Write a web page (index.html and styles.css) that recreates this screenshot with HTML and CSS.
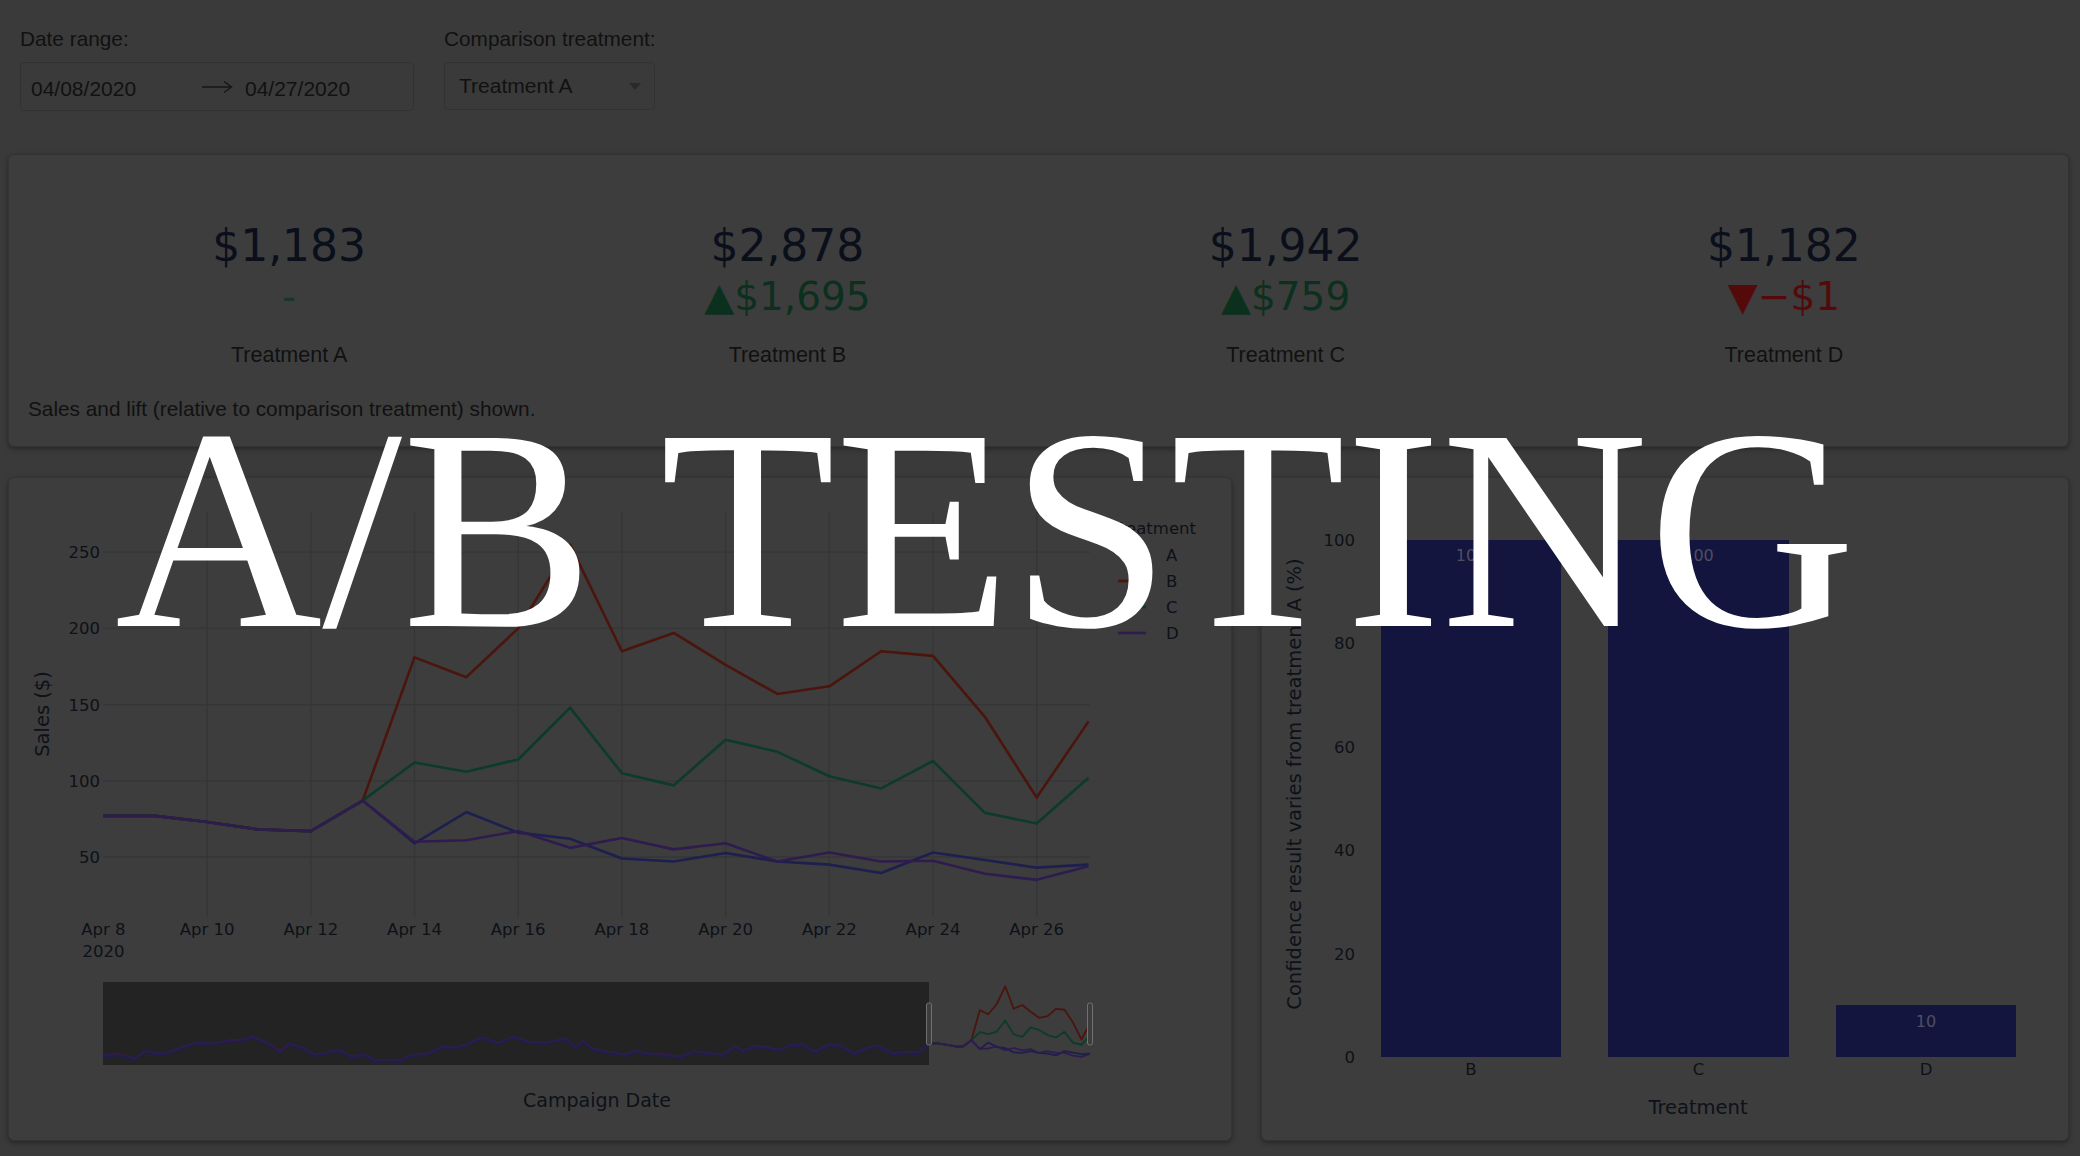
FILE: index.html
```html
<!DOCTYPE html>
<html lang="en">
<head>
<meta charset="utf-8">
<title>A/B Testing</title>
<link rel="stylesheet" href="styles.css">
</head>
<body>
<div class="page">
  <div class="controls">
    <div class="field">
      <label class="field-label">Date range:</label>
      <div class="date-box">
        <span class="date-start">04/08/2020</span>
        <svg class="date-arrow" width="31" height="14" viewBox="0 0 31 14"><path d="M0 7H29M22 1.5L29.5 7L22 12.5" fill="none" stroke="#161616" stroke-width="1.4"/></svg>
        <span class="date-end">04/27/2020</span>
      </div>
    </div>
    <div class="field">
      <label class="field-label">Comparison treatment:</label>
      <div class="select-box">
        <span>Treatment A</span>
        <span class="caret"></span>
      </div>
    </div>
  </div>

  <section class="card summary">
    <div class="indicators">
      <div class="indicator">
        <div class="ind-value">$1,183</div>
        <div class="ind-delta flat">-</div>
        <div class="ind-label">Treatment A</div>
      </div>
      <div class="indicator">
        <div class="ind-value">$2,878</div>
        <div class="ind-delta up">▲$1,695</div>
        <div class="ind-label">Treatment B</div>
      </div>
      <div class="indicator">
        <div class="ind-value">$1,942</div>
        <div class="ind-delta up">▲$759</div>
        <div class="ind-label">Treatment C</div>
      </div>
      <div class="indicator">
        <div class="ind-value">$1,182</div>
        <div class="ind-delta down">▼−$1</div>
        <div class="ind-label">Treatment D</div>
      </div>
    </div>
    <p class="note">Sales and lift (relative to comparison treatment) shown.</p>
  </section>

  <div class="charts">
    <section class="card chart-line">
      <svg class="chart-svg" width="1222" height="662" viewBox="9 478 1222 662">
        <g class="grid">
          <path d="M103 552.2H1090M103 628.4H1090M103 704.6H1090M103 780.8H1090M103 857H1090"/>
          <path d="M207.1 512V917M310.8 512V917M414.5 512V917M518.2 512V917M621.9 512V917M725.6 512V917M829.3 512V917M933 512V917M1036.7 512V917"/>
        </g>
        <g class="tick" text-anchor="end">
          <text x="100" y="558.2">250</text>
          <text x="100" y="634.4">200</text>
          <text x="100" y="710.6">150</text>
          <text x="100" y="786.8">100</text>
          <text x="100" y="863">50</text>
        </g>
        <g class="tick" text-anchor="middle">
          <text x="103.4" y="935">Apr 8</text>
          <text x="103.4" y="957">2020</text>
          <text x="207.1" y="935">Apr 10</text>
          <text x="310.8" y="935">Apr 12</text>
          <text x="414.5" y="935">Apr 14</text>
          <text x="518.2" y="935">Apr 16</text>
          <text x="621.9" y="935">Apr 18</text>
          <text x="725.6" y="935">Apr 20</text>
          <text x="829.3" y="935">Apr 22</text>
          <text x="933" y="935">Apr 24</text>
          <text x="1036.7" y="935">Apr 26</text>
        </g>
        <text class="axis-title" text-anchor="middle" transform="translate(49 714) rotate(-90)">Sales ($)</text>

        <g class="series" transform="translate(103.4 933.2) scale(51.85 -1.524)">
          <polyline class="s-a" vector-effect="non-scaling-stroke" points="0,77 1,77 2,73 3,68 4,67 5,87 6,59 7,79.5 8,66 9,62 10,49 11,47 12,52.6 13,47 14,45 15,39.5 16,53 17,48 18,43 19,45"/>
          <polyline class="s-b" vector-effect="non-scaling-stroke" points="0,77 1,77 2,73 3,68 4,67 5,87 6,181 7,168 8,200 9,255 10,185 11,197 12,176 13,157 14,162 15,185 16,182 17,142 18,89 19,139"/>
          <polyline class="s-c" vector-effect="non-scaling-stroke" points="0,77 1,77 2,73 3,68 4,67 5,87 6,112 7,106 8,114 9,148 10,105 11,97 12,127 13,119 14,103 15,95 16,113 17,79 18,72 19,102"/>
          <polyline class="s-d" vector-effect="non-scaling-stroke" points="0,77 1,77 2,73 3,68 4,67 5,87 6,60 7,61 8,67 9,56 10,62.5 11,55 12,59 13,47 14,53 15,47 16,47.5 17,39 18,35 19,44"/>
        </g>

        <g class="legend">
          <text class="tick" x="1112" y="534">Treatment</text>
          <path class="s-a" d="M1118 555H1146"/>
          <path class="s-b" d="M1118 581H1146"/>
          <path class="s-c" d="M1118 607H1146"/>
          <path class="s-d" d="M1118 633H1146"/>
          <text class="tick" x="1166" y="560.5">A</text>
          <text class="tick" x="1166" y="586.5">B</text>
          <text class="tick" x="1166" y="612.5">C</text>
          <text class="tick" x="1166" y="638.5">D</text>
        </g>

        <rect class="range-mask" x="103" y="982" width="826" height="83"/>
        <g class="mini" transform="translate(0 901.5) scale(0.7905 0.3333)">
          <polyline class="s-a" vector-effect="non-scaling-stroke" points="130,465 150,462 170,475 185,452 200,460 215,455 230,440 250,428 270,430 290,420 305,420 320,410 340,430 355,455 365,430 380,440 400,465 415,455 430,450 445,470 460,462 475,482 490,478 505,482 520,465 540,460 560,440 575,443 590,432 610,412 630,428 650,410 670,425 690,428 700,423 715,415 728,440 738,422 750,447 770,455 790,463 805,452 820,460 840,462 860,470 880,453 900,460 915,463 930,437 940,452 955,438 970,440 985,450 1000,435 1015,432 1030,455 1050,432 1065,437 1080,460 1095,445 1110,436 1130,460 1145,455 1160,458 1175,432"/>
        </g>
        <g class="mini" transform="translate(0 900) scale(0.7905 0.3333)">
          <polyline class="s-d" vector-effect="non-scaling-stroke" points="130,465 150,462 170,475 185,452 200,460 215,455 230,440 250,428 270,430 290,420 305,420 320,410 340,430 355,455 365,430 380,440 400,465 415,455 430,450 445,470 460,462 475,482 490,478 505,482 520,465 540,460 560,440 575,443 590,432 610,412 630,428 650,410 670,425 690,428 700,423 715,415 728,440 738,422 750,447 770,455 790,463 805,452 820,460 840,462 860,470 880,453 900,460 915,463 930,437 940,452 955,438 970,440 985,450 1000,435 1015,432 1030,455 1050,432 1065,437 1080,460 1095,445 1110,436 1130,460 1145,455 1160,458 1175,432"/>
        </g>
        <g class="mini" transform="translate(929 1068) scale(8.47 -0.32)">
          <polyline class="s-a" vector-effect="non-scaling-stroke" points="0,77 1,77 2,73 3,68 4,67 5,87 6,59 7,79.5 8,66 9,62 10,49 11,47 12,52.6 13,47 14,45 15,39.5 16,53 17,48 18,43 19,45"/>
          <polyline class="s-b" vector-effect="non-scaling-stroke" points="0,77 1,77 2,73 3,68 4,67 5,87 6,181 7,168 8,200 9,255 10,185 11,197 12,176 13,157 14,162 15,185 16,182 17,142 18,89 19,139"/>
          <polyline class="s-c" vector-effect="non-scaling-stroke" points="0,77 1,77 2,73 3,68 4,67 5,87 6,112 7,106 8,114 9,148 10,105 11,97 12,127 13,119 14,103 15,95 16,113 17,79 18,72 19,102"/>
          <polyline class="s-d" vector-effect="non-scaling-stroke" points="0,77 1,77 2,73 3,68 4,67 5,87 6,60 7,61 8,67 9,56 10,62.5 11,55 12,59 13,47 14,53 15,47 16,47.5 17,39 18,35 19,44"/>
        </g>
        <rect class="range-handle" x="926.5" y="1003" width="5" height="42" rx="2"/>
        <rect class="range-handle" x="1087.5" y="1003" width="5" height="42" rx="2"/>
        <text class="axis-title mid" x="597" y="1107" text-anchor="middle">Campaign Date</text>
      </svg>
    </section>

    <section class="card chart-bar">
      <svg class="chart-svg" width="806" height="662" viewBox="1262 478 806 662">
        <g class="tick" text-anchor="end">
          <text x="1355" y="546">100</text>
          <text x="1355" y="649.4">80</text>
          <text x="1355" y="752.8">60</text>
          <text x="1355" y="856.2">40</text>
          <text x="1355" y="959.6">20</text>
          <text x="1355" y="1063">0</text>
        </g>
        <g class="bars">
          <rect x="1381" y="540" width="180" height="517"/>
          <rect x="1608" y="540" width="181" height="517"/>
          <rect x="1836" y="1005" width="180" height="52"/>
        </g>
        <g class="bar-label" text-anchor="middle">
          <text x="1471" y="561">100</text>
          <text x="1698.5" y="561">100</text>
          <text x="1926" y="1027">10</text>
        </g>
        <g class="tick" text-anchor="middle">
          <text x="1471" y="1075">B</text>
          <text x="1698.5" y="1075">C</text>
          <text x="1926" y="1075">D</text>
        </g>
        <text class="axis-title" x="1698" y="1114" text-anchor="middle">Treatment</text>
        <text class="axis-title" text-anchor="middle" transform="translate(1301 784) rotate(-90)">Confidence result varies from treatment A (%)</text>
      </svg>
    </section>
  </div>

  <h1 class="overlay-title">A/B TESTING</h1>
</div>
</body>
</html>
```

FILE: styles.css
```css
html, body {
  margin: 0;
  padding: 0;
  background: #3a3a3a;
}

body {
  width: 2080px;
  height: 1156px;
  overflow: hidden;
  font-family: "Liberation Sans", Arial, sans-serif;
  color: #111111;
}

.page {
  position: relative;
  padding: 0 11px 0 8px;
}

/* ---------- controls ---------- */
.controls {
  display: flex;
  gap: 30px;
  padding: 27px 0 0 12px;
}

.field {
  display: flex;
  flex-direction: column;
}

.field-label {
  font-size: 20.8px;
  line-height: 24px;
  margin-bottom: 11px;
  color: #111111;
}

.date-box {
  box-sizing: border-box;
  width: 394px;
  height: 49px;
  border: 1px solid #323232;
  border-radius: 4px;
  display: flex;
  align-items: center;
  padding: 4px 0 0 10px;
  font-size: 21px;
  color: #111111;
}

.date-start {
  width: 171px;
}

.date-arrow {
  display: block;
  margin-right: 12px;
  margin-top: -4px;
}

.select-box {
  box-sizing: border-box;
  width: 211px;
  height: 48px;
  border: 1px solid #323232;
  border-radius: 4px;
  display: flex;
  align-items: center;
  justify-content: space-between;
  padding: 0 13px 0 14px;
  font-size: 21px;
  color: #111111;
}

.caret {
  width: 0;
  height: 0;
  border-left: 6px solid transparent;
  border-right: 6px solid transparent;
  border-top: 7px solid #2a2a2a;
}

/* ---------- cards ---------- */
.card {
  box-sizing: border-box;
  background: #3d3d3d;
  border: 1px solid #333333;
  border-radius: 6px;
  box-shadow: 0 2px 5px rgba(0, 0, 0, 0.35);
}

.summary {
  margin-top: 43px;
  height: 293px;
  padding-top: 68px;
}

.indicators {
  display: grid;
  grid-template-columns: repeat(4, 1fr);
  padding: 0 35px 0 31px;
}

.indicator {
  text-align: center;
  font-family: "DejaVu Sans", Verdana, sans-serif;
}

.ind-value {
  font-size: 44px;
  line-height: 46px;
  color: #0a0f1b;
}

.ind-delta {
  margin-top: 4px;
  font-size: 39px;
  line-height: 48px;
}

.ind-delta.up {
  color: #0c301e;
}

.ind-delta.flat {
  color: #1b3628;
}

.ind-delta.down {
  color: #540a0a;
}

.ind-label {
  margin-top: 21px;
  font-family: "Liberation Sans", Arial, sans-serif;
  font-size: 21.5px;
  line-height: 26px;
  color: #111111;
}

.note {
  margin: 28px 0 0 19px;
  font-size: 20.8px;
  line-height: 26px;
  color: #111111;
}

/* ---------- charts ---------- */
.charts {
  display: flex;
  gap: 29px;
  margin-top: 30px;
}

.chart-line {
  width: 1224px;
  height: 664px;
}

.chart-bar {
  width: 808px;
  height: 664px;
}

.chart-svg {
  display: block;
}

.grid path {
  stroke: #353637;
  stroke-width: 1.3;
  fill: none;
}

.tick {
  font-family: "DejaVu Sans", Verdana, sans-serif;
  font-size: 16.5px;
  fill: #0d1118;
}

.axis-title {
  font-family: "DejaVu Sans", Verdana, sans-serif;
  font-size: 19.5px;
  fill: #0d1118;
}

.axis-title.mid {
  font-size: 19px;
}

.series polyline,
.legend path {
  fill: none;
  stroke-width: 2.6;
  stroke-linejoin: round;
}

.mini polyline {
  fill: none;
  stroke-width: 1.8;
  stroke-linejoin: round;
}

.s-a { stroke: #1d1f4f; }
.s-b { stroke: #4b150d; }
.s-c { stroke: #0c3b2b; }
.s-d { stroke: #2f1c4f; }

.range-mask {
  fill: #232323;
}

.range-handle {
  fill: #3d3d3d;
  stroke: #707070;
  stroke-width: 1;
}

.bars rect {
  fill: #13153f;
}

.bar-label {
  font-family: "DejaVu Sans", Verdana, sans-serif;
  font-size: 16px;
  fill: #4e4f5e;
}

/* ---------- overlay ---------- */
.overlay-title {
  position: absolute;
  top: 386px;
  left: 115px;
  margin: 0;
  font-family: "Liberation Serif", "Times New Roman", serif;
  font-weight: normal;
  font-size: 287px;
  line-height: 1;
  color: #ffffff;
  white-space: nowrap;
}
```
